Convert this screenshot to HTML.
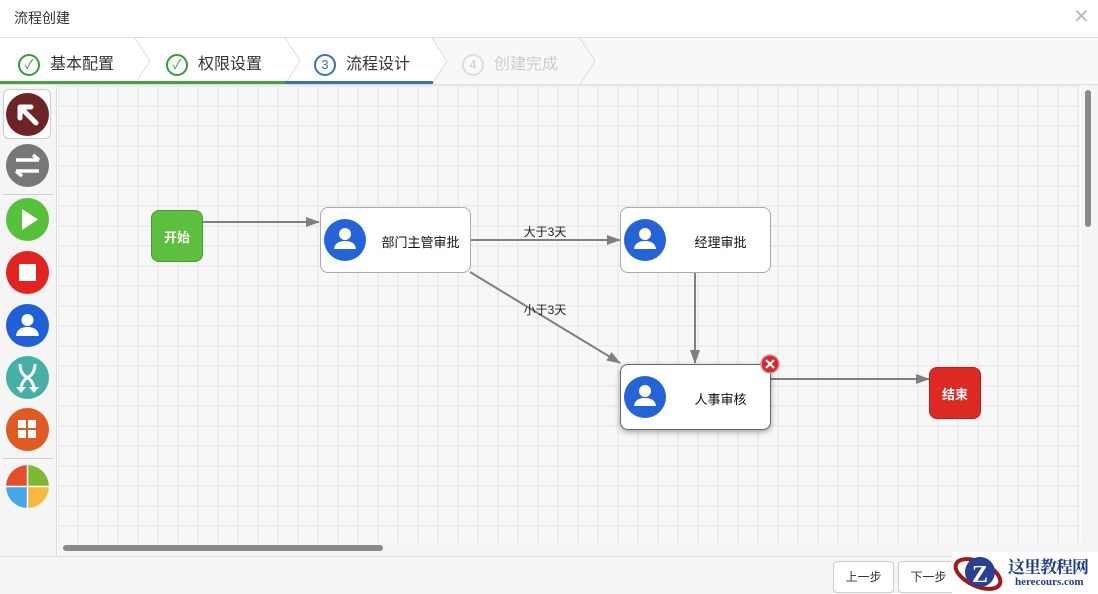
<!DOCTYPE html>
<html><head><meta charset="utf-8"><style>
*{margin:0;padding:0;box-sizing:border-box}
body{width:1098px;height:594px;overflow:hidden;background:#fff;font-family:"Liberation Sans","Noto Sans CJK SC",sans-serif;position:relative;color:#333}
.abs{position:absolute}
.title{left:14px;top:8px;font-size:14px;color:#333}
.close{left:1073px;top:4px;font-size:20px;color:#bbb}
.steps{left:0;top:37px;width:1098px;height:48px;background:#f8f8f8;border-top:1px solid #ddd;border-bottom:1px solid #ddd}
.step{position:absolute;top:12px;font-size:16px;color:#333}
.circ{display:inline-block;width:22px;height:22px;border-radius:50%;border:2px solid #3a9a3a;vertical-align:middle;margin-right:10px;text-align:center;font-size:13px;line-height:18px}
.canvas{left:58px;top:85px;width:1022px;height:457px;background-color:#f7f7f7;
background-image:linear-gradient(#ededed 2px,transparent 2px),linear-gradient(90deg,#ededed 2px,transparent 2px);
background-size:20px 20px;background-position:-1px 0}
.tool{left:0;top:85px;width:57px;height:471px;background:#f5f5f5;border-right:1px solid #ddd}
.ic{position:absolute;left:6px;width:43px;height:43px;border-radius:50%}
.node{position:absolute;background:#fff;border:1px solid #aaa;border-radius:8px;width:151px;height:66px;font-size:13px;color:#111}
.node .av{position:absolute;left:3px;top:11px;width:42px;height:42px;border-radius:50%;background:#2563d9}
.node .t{position:absolute;left:50px;right:0;top:24px;text-align:center}
.bottom{left:0;top:556px;width:1098px;height:38px;background:#f5f5f5;border-top:1px solid #ddd}
.btn{position:absolute;top:561px;width:61px;height:32px;border:1px solid #ccc;border-radius:4px;background:#fff;font-size:12px;text-align:center;line-height:30px}
</style></head><body>
<div class="abs title">流程创建</div>
<div class="abs close">✕</div>
<div class="abs steps">
<svg class="abs" style="left:0;top:0" width="1098" height="46">
<polygon points="0,0 135,0 150,23 135,46 0,46" fill="#fff"/>
<polygon points="135,0 285,0 300,23 285,46 135,46 150,23" fill="#fff"/>
<polygon points="285,0 432,0 447,23 432,46 285,46 300,23" fill="#fff"/>
<polyline points="135,0 150,23 135,46" fill="none" stroke="#ddd"/>
<polyline points="285,0 300,23 285,46" fill="none" stroke="#ddd"/>
<polyline points="432,0 447,23 432,46" fill="none" stroke="#ddd"/>
<polyline points="580,0 595,23 580,46" fill="none" stroke="#ddd"/>
<rect x="0" y="43" width="285" height="3" fill="#4a9e44"/>
<rect x="285" y="43" width="148" height="3" fill="#3a72b0"/>
</svg>
<div class="step" style="left:18px"><span class="circ" style="color:#3a9a3a">✓</span>基本配置</div>
<div class="step" style="left:166px"><span class="circ" style="color:#3a9a3a">✓</span>权限设置</div>
<div class="step" style="left:314px"><span class="circ" style="border-color:#3a72b0;color:#3a72b0">3</span>流程设计</div>
<div class="step" style="left:462px;color:#ccc"><span class="circ" style="border-color:#ddd;color:#ccc">4</span>创建完成</div>
</div>
<div class="abs canvas"></div>
<div class="abs tool">
<div style="position:absolute;left:3px;top:4px;width:48px;height:50px;border:1px solid #ccc;border-radius:6px;background:#fff"></div>
<div class="ic" style="top:8px;background:#6e2426"><svg width="43" height="43"><path d="M14 14 L30 30 M14 14 L14 25 M14 14 L25 14" stroke="#fff" stroke-width="5" fill="none" stroke-linecap="round"/></svg></div>
<div class="ic" style="top:59px;background:#777"><svg width="43" height="43"><path d="M10 16 H33 M27 11 L33 16 M33 27 H10 M16 32 L10 27" stroke="#fff" stroke-width="3.5" fill="none"/></svg></div>
<div style="position:absolute;left:3px;top:109px;width:50px;border-top:1px solid #ccc"></div>
<div class="ic" style="top:113px;background:#56c13a"><svg width="43" height="43"><path d="M16 11 L32 21.5 L16 32Z" fill="#fff"/></svg></div>
<div class="ic" style="top:166px;background:#e3231f"><svg width="43" height="43"><rect x="13" y="13" width="17" height="17" fill="#fff"/></svg></div>
<div class="ic" style="top:219px;background:#1f5fd8"><svg width="43" height="43"><circle cx="21.5" cy="16" r="6" fill="#fff"/><path d="M10 32 Q11 23 21.5 23 Q32 23 33 32Z" fill="#fff"/></svg></div>
<div class="ic" style="top:271px;background:#47b0a6"><svg width="43" height="43"><path d="M14 8 Q14 18 22 22 Q28 26 28 34 M29 8 Q29 18 21 22 Q15 26 15 34" stroke="#fff" stroke-width="3" fill="none"/><path d="M10 31 L15 37 L20 31Z M23 31 L28 37 L33 31Z" fill="#fff"/></svg></div>
<div class="ic" style="top:323px;background:#e05a24"><svg width="43" height="43"><rect x="12" y="12" width="8" height="8" fill="#fff"/><rect x="22" y="12" width="8" height="8" fill="#fff"/><rect x="12" y="22" width="8" height="8" fill="#fff"/><rect x="22" y="22" width="8" height="8" fill="#fff"/></svg></div>
<div style="position:absolute;left:3px;top:373px;width:50px;border-top:1px solid #ccc"></div>
<div class="ic" style="top:380px;overflow:hidden"><svg width="43" height="43"><path d="M21.5 21.5 V0 A21.5 21.5 0 0 0 0 21.5Z" fill="#e84d2a"/><path d="M21.5 21.5 V0 A21.5 21.5 0 0 1 43 21.5Z" fill="#7cba33"/><path d="M21.5 21.5 H0 A21.5 21.5 0 0 0 21.5 43Z" fill="#45a7ea"/><path d="M21.5 21.5 H43 A21.5 21.5 0 0 1 21.5 43Z" fill="#f6b93b"/><path d="M21.5 0V43M0 21.5H43" stroke="#fff" stroke-width="1.5"/></svg></div>
</div>
<svg class="abs" style="left:0;top:0" width="1098" height="594">
<defs><marker id="a" markerWidth="14" markerHeight="10" refX="13" refY="5" orient="auto" markerUnits="userSpaceOnUse"><path d="M0 0 L14 5 L0 10Z" fill="#808080"/></marker></defs>
<g stroke="#808080" stroke-width="2" fill="none" marker-end="url(#a)">
<line x1="203" y1="222" x2="319" y2="222"/>
<line x1="470" y1="240" x2="620" y2="240"/>
<line x1="470" y1="272" x2="620" y2="363"/>
<line x1="695" y1="272" x2="695" y2="363"/>
<line x1="770" y1="379" x2="929" y2="379"/>
</g>
<text x="545" y="236" font-size="12" text-anchor="middle" fill="#222" font-family="Liberation Sans,Noto Sans CJK SC,sans-serif">大于3天</text>
<text x="545" y="314" font-size="12" text-anchor="middle" fill="#222" font-family="Liberation Sans,Noto Sans CJK SC,sans-serif">小于3天</text>
</svg>
<div class="abs" style="left:151px;top:210px;width:52px;height:52px;background:#5cbf3e;border:1px solid #4a9a30;border-radius:8px;color:#fff;font-weight:bold;font-size:13px;text-align:center;line-height:54px">开始</div>
<div class="abs" style="left:929px;top:367px;width:52px;height:52px;background:#dd2a25;border:1px solid #b82020;border-radius:8px;color:#fff;font-weight:bold;font-size:13px;text-align:center;line-height:54px">结束</div>
<div class="node" style="left:320px;top:207px"><div class="av"><svg width="42" height="42"><circle cx="21" cy="15" r="6" fill="#fff"/><path d="M10 30 Q11 22 21 22 Q31 22 32 30Z" fill="#fff"/></svg></div><div class="t">部门主管审批</div></div>
<div class="node" style="left:620px;top:207px"><div class="av"><svg width="42" height="42"><circle cx="21" cy="15" r="6" fill="#fff"/><path d="M10 30 Q11 22 21 22 Q31 22 32 30Z" fill="#fff"/></svg></div><div class="t">经理审批</div></div>
<div class="node" style="left:620px;top:364px;border-color:#666;box-shadow:0 2px 6px rgba(0,0,0,.35)"><div class="av"><svg width="42" height="42"><circle cx="21" cy="15" r="6" fill="#fff"/><path d="M10 30 Q11 22 21 22 Q31 22 32 30Z" fill="#fff"/></svg></div><div class="t">人事审核</div></div>
<svg class="abs" style="left:760px;top:354px" width="20" height="20"><circle cx="10" cy="10" r="9" fill="#d9262c" stroke="#c9a0a0" stroke-width="1.5"/><path d="M6 6 L14 14 M14 6 L6 14" stroke="#fff" stroke-width="2.2"/></svg>
<div class="abs" style="left:1081px;top:85px;width:17px;height:471px;background:#f5f5f5"></div>
<div class="abs" style="left:1085px;top:90px;width:6px;height:137px;background:#8a8a8a;border-radius:3px"></div>
<div class="abs" style="left:58px;top:542px;width:1023px;height:14px;background:#f5f5f5"></div>
<div class="abs" style="left:63px;top:545px;width:320px;height:6px;background:#8a8a8a;border-radius:3px"></div>
<div class="abs bottom"></div>
<div class="btn" style="left:833px">上一步</div>
<div class="btn" style="left:898px">下一步</div>
<div class="abs" style="left:952px;top:552px;width:146px;height:42px;background:#fff"></div>
<svg class="abs" style="left:952px;top:552px" width="56" height="42"><ellipse cx="26" cy="22" rx="24" ry="12" fill="none" stroke="#a01818" stroke-width="4" transform="rotate(25 26 22)"/><circle cx="28" cy="20" r="15" fill="#2a3f96"/><text x="20" y="30" font-size="24" font-weight="bold" fill="#fff" font-family="Liberation Serif,serif">Z</text></svg>
<div class="abs" style="left:1008px;top:553px;font-size:17px;font-weight:bold;color:#1d3a8e;font-family:'Liberation Serif','Noto Serif CJK SC',serif;letter-spacing:-1px">这里教程网</div>
<div class="abs" style="left:1015px;top:576px;font-size:11px;font-weight:bold;color:#1d3a8e;font-family:'Liberation Serif',serif">herecours.com</div>
</body></html>
